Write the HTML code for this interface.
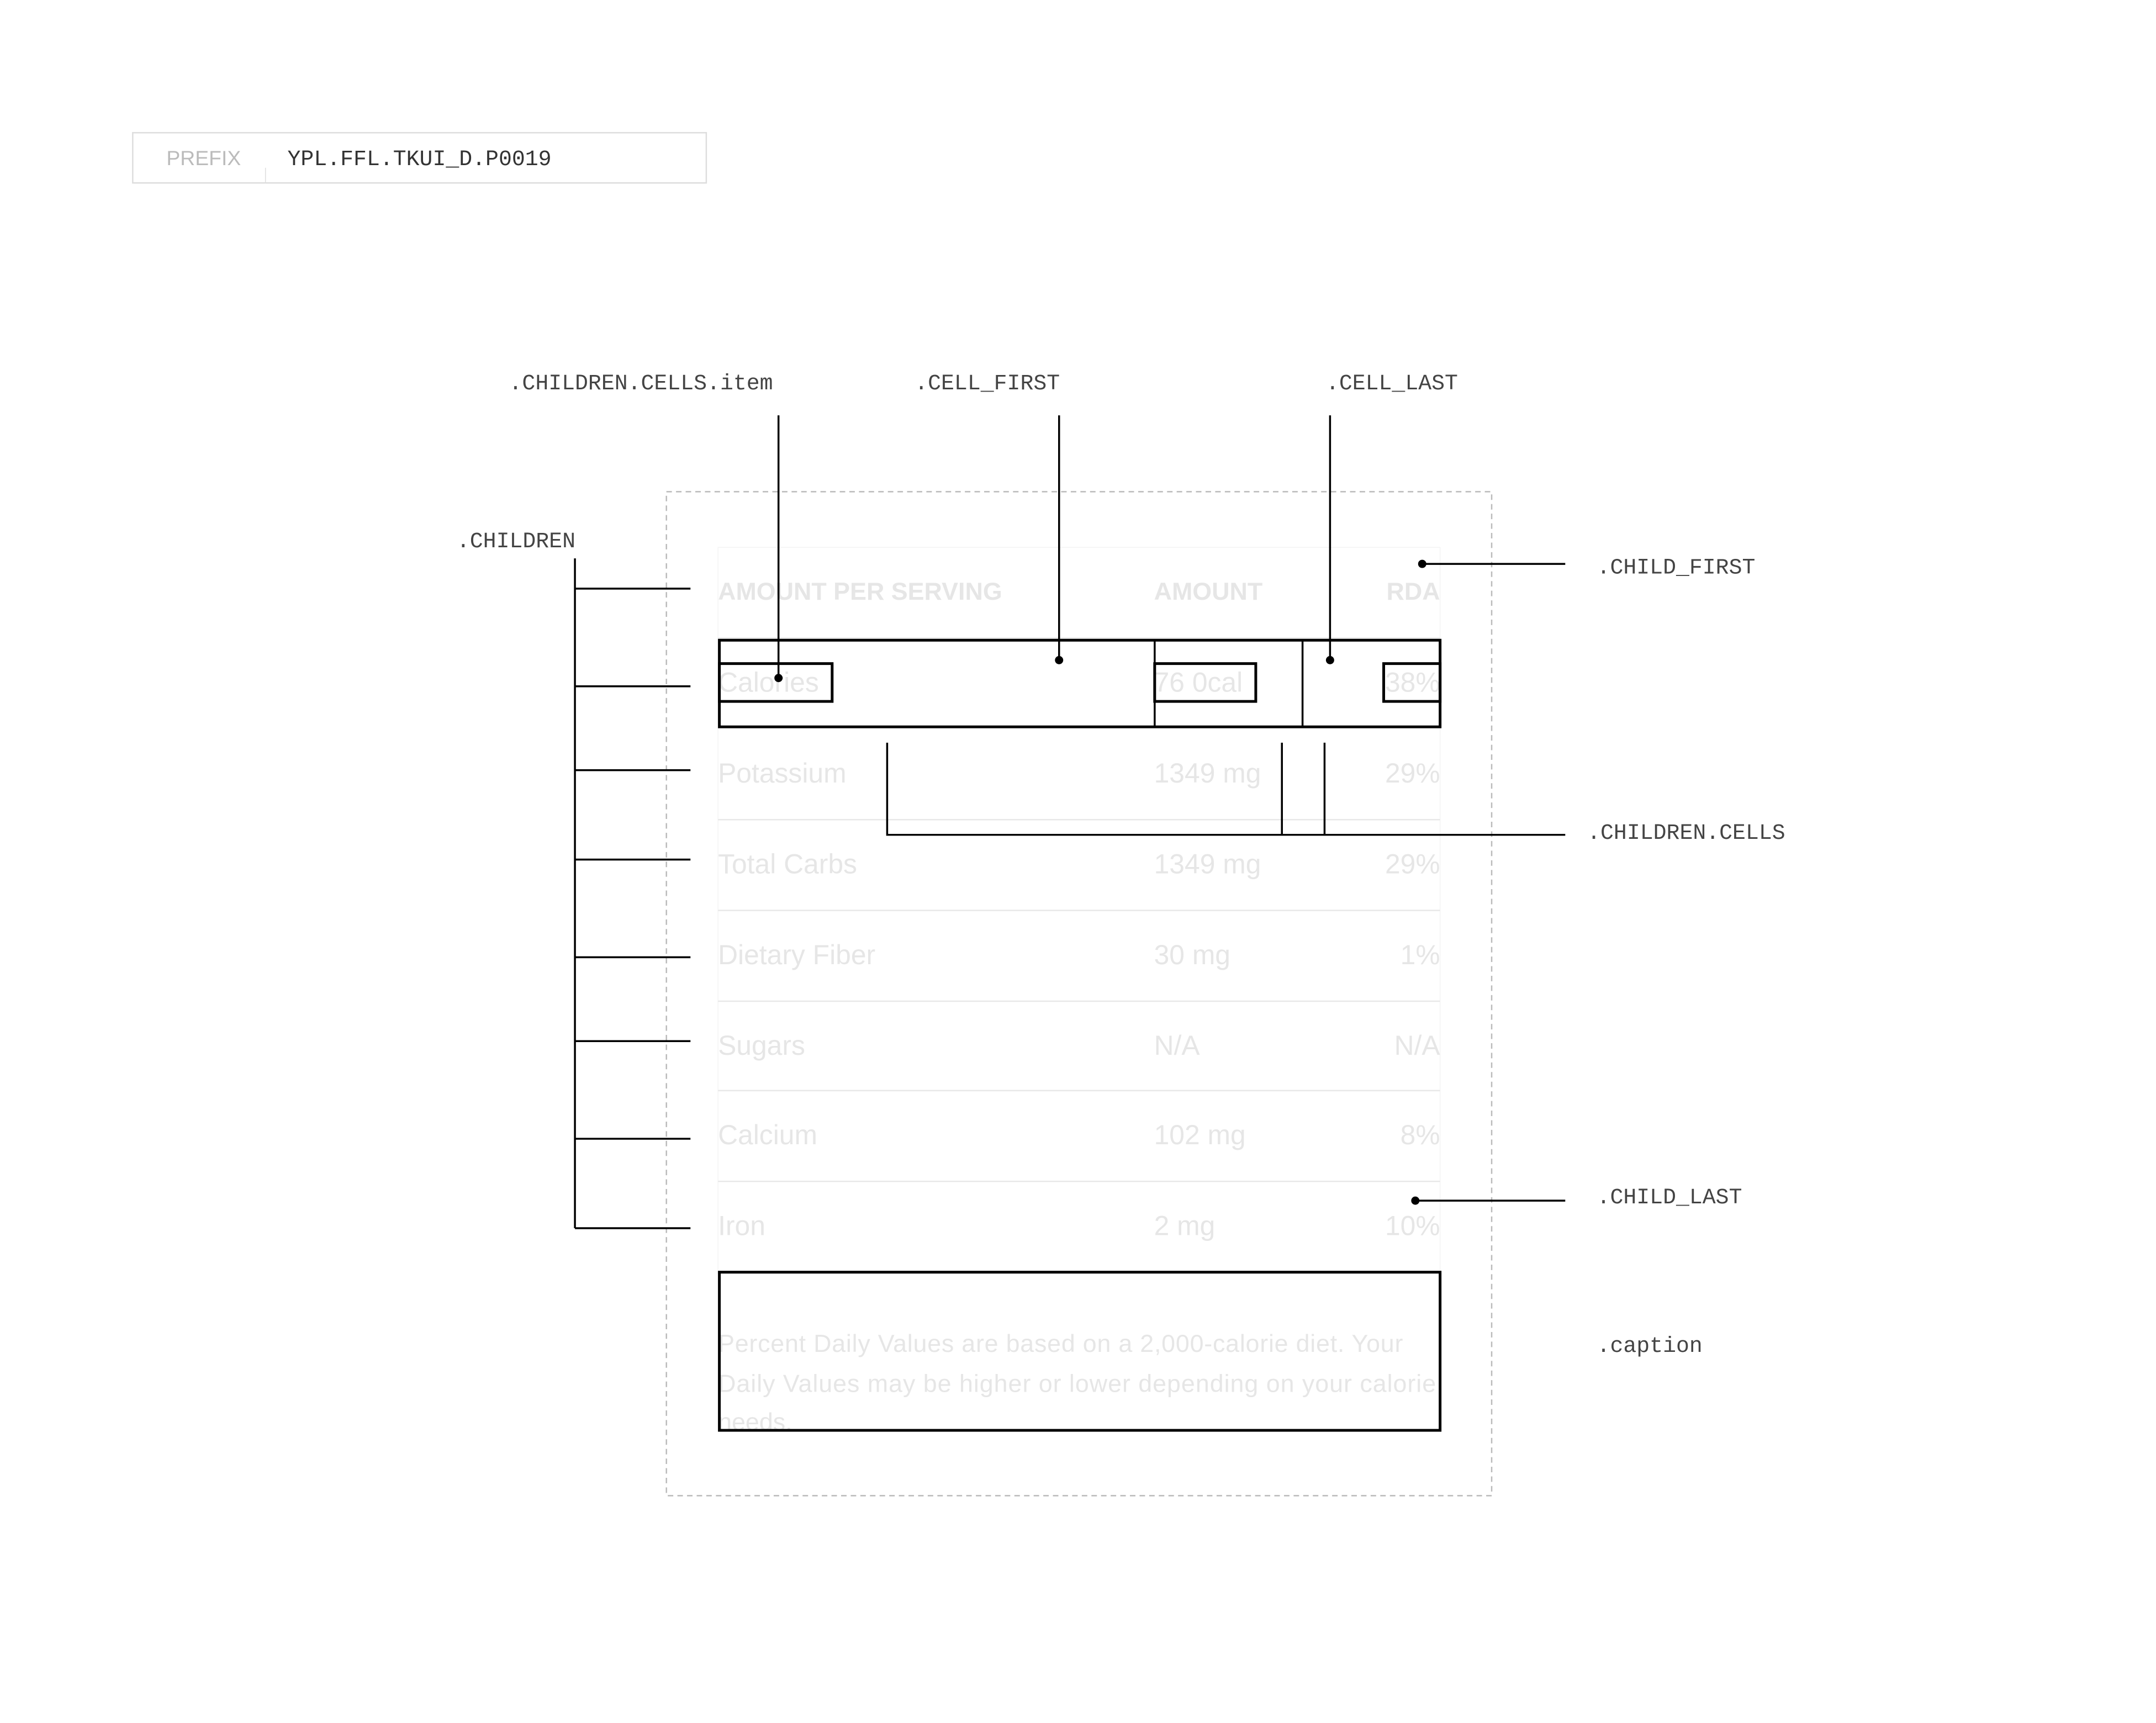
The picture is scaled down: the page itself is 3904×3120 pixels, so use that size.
<!DOCTYPE html>
<html><head><meta charset="utf-8"><style>
html,body{margin:0;padding:0;background:#fff;}
svg{display:block;}
.m{font-family:"Liberation Mono",monospace;fill:#444;font-size:16px;}
.t{font-family:"Liberation Sans",sans-serif;fill:#e6e6e6;font-size:20px;}
</style></head><body>
<svg width="3904" height="3120" viewBox="0 0 1567.5 1252.8" preserveAspectRatio="none" xmlns="http://www.w3.org/2000/svg">
<rect x="0" y="0" width="1567.5" height="1252.8" fill="#fff"/>
<rect x="96.5" y="96.5" width="417" height="36.5" fill="none" stroke="#ddd" stroke-width="1"/>
<line x1="193" y1="122" x2="193" y2="133" stroke="#ddd" stroke-width="0.6"/>
<text x="121" y="120" font-family="Liberation Sans, sans-serif" font-size="15" fill="#bbb">PREFIX</text>
<text x="209" y="120" class="m" style="fill:#333">YPL.FFL.TKUI_D.P0019</text>
<text x="370" y="283" class="m">.CHILDREN.CELLS.item</text>
<text x="665" y="283" class="m">.CELL_FIRST</text>
<text x="964" y="283" class="m">.CELL_LAST</text>
<text x="332" y="398" class="m">.CHILDREN</text>
<text x="1161" y="417" class="m">.CHILD_FIRST</text>
<text x="1154" y="610" class="m">.CHILDREN.CELLS</text>
<text x="1161" y="875" class="m">.CHILD_LAST</text>
<text x="1161" y="983" class="m">.caption</text>
<rect x="484.5" y="357.5" width="600" height="730" fill="none" stroke="#bbb" stroke-width="1" stroke-dasharray="4,3"/>
<rect x="522" y="398" width="525" height="528" fill="none" stroke="#f2f2f2" stroke-width="0.5"/>
<g stroke="#e8e8e8" stroke-width="1">
<line x1="522" y1="464" x2="1047" y2="464"/>
<line x1="522" y1="596" x2="1047" y2="596"/>
<line x1="522" y1="662" x2="1047" y2="662"/>
<line x1="522" y1="728" x2="1047" y2="728"/>
<line x1="522" y1="793" x2="1047" y2="793"/>
<line x1="522" y1="859" x2="1047" y2="859"/>
</g>
<g class="t">
<text x="522" y="436" font-weight="bold" font-size="18">AMOUNT PER SERVING</text>
<text x="839" y="436" font-weight="bold" font-size="18">AMOUNT</text>
<text x="1047" y="436" font-weight="bold" font-size="18" text-anchor="end">RDA</text>
<text x="522" y="503">Calories</text><text x="839" y="503">76 0cal</text><text x="1047" y="503" text-anchor="end">38%</text>
<text x="522" y="569">Potassium</text><text x="839" y="569">1349 mg</text><text x="1047" y="569" text-anchor="end">29%</text>
<text x="522" y="635">Total Carbs</text><text x="839" y="635">1349 mg</text><text x="1047" y="635" text-anchor="end">29%</text>
<text x="522" y="701">Dietary Fiber</text><text x="839" y="701">30 mg</text><text x="1047" y="701" text-anchor="end">1%</text>
<text x="522" y="767">Sugars</text><text x="839" y="767">N/A</text><text x="1047" y="767" text-anchor="end">N/A</text>
<text x="522" y="832">Calcium</text><text x="839" y="832">102 mg</text><text x="1047" y="832" text-anchor="end">8%</text>
<text x="522" y="898">Iron</text><text x="839" y="898">2 mg</text><text x="1047" y="898" text-anchor="end">10%</text>
</g>
<g class="t" style="font-size:18px">
<text x="522" y="983" textLength="498">Percent Daily Values are based on a 2,000-calorie diet. Your</text>
<text x="522" y="1012" textLength="522">Daily Values may be higher or lower depending on your calorie</text>
<text x="522" y="1040">needs.</text>
</g>
<g fill="none" stroke="#000" stroke-width="2">
<rect x="523" y="465.5" width="524" height="63"/>
<rect x="523" y="482.5" width="82" height="27.5"/>
<rect x="839.5" y="482.5" width="73.5" height="27.5"/>
<rect x="1006" y="482.5" width="41" height="27.5"/>
<rect x="523" y="925" width="524" height="115"/>
</g>
<g stroke="#000" stroke-width="1.4" fill="none">
<line x1="839.5" y1="465" x2="839.5" y2="529"/>
<line x1="947" y1="465" x2="947" y2="529"/>
<line x1="566" y1="302" x2="566" y2="493"/>
<line x1="770" y1="302" x2="770" y2="480"/>
<line x1="967" y1="302" x2="967" y2="480"/>
<line x1="418" y1="406" x2="418" y2="893"/>
<line x1="418" y1="428" x2="502" y2="428"/>
<line x1="418" y1="499" x2="502" y2="499"/>
<line x1="418" y1="560" x2="502" y2="560"/>
<line x1="418" y1="625" x2="502" y2="625"/>
<line x1="418" y1="696" x2="502" y2="696"/>
<line x1="418" y1="757" x2="502" y2="757"/>
<line x1="418" y1="828" x2="502" y2="828"/>
<line x1="418" y1="893" x2="502" y2="893"/>
<line x1="1034" y1="410" x2="1138" y2="410"/>
<line x1="1029" y1="873" x2="1138" y2="873"/>
<polyline points="645,540 645,607 1138,607"/>
<line x1="932" y1="540" x2="932" y2="607"/>
<line x1="963" y1="540" x2="963" y2="607"/>
</g>
<g fill="#000">
<circle cx="566" cy="493" r="3"/>
<circle cx="770" cy="480" r="3"/>
<circle cx="967" cy="480" r="3"/>
<circle cx="1034" cy="410" r="3"/>
<circle cx="1029" cy="873" r="3"/>
</g>
</svg>
</body></html>
